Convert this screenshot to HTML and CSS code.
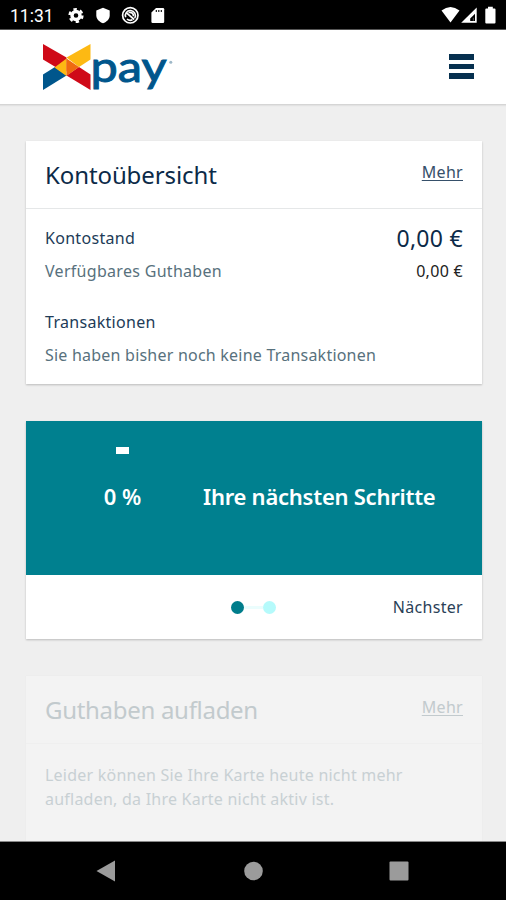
FILE: index.html
```
<!DOCTYPE html>
<html lang="de">
<head>
<meta charset="UTF-8" />
<title>Xpay</title>
<link rel="stylesheet" href="styles.css">
</head>
<body>
<div class="status-bar">
    <span class="clock">11:31</span>
    <svg class="status-icons" width="100" height="30" viewBox="0 0 100 30">
        <!-- settings -->
        <circle cx="9" cy="15.5" r="4" fill="none" stroke="#fff" stroke-width="3.4"/>
        <circle cx="9" cy="15.5" r="6.4" fill="none" stroke="#fff" stroke-width="2.4" stroke-dasharray="3.4 3.3"/>
        <!-- shield -->
        <path d="M36 7.8l6.7 2.8v4.6c0 3.8-2.8 6.6-6.7 8-3.9-1.4-6.7-4.2-6.7-8v-4.6z" fill="#fff"/>
        <!-- do not track -->
        <circle cx="63.3" cy="15.3" r="7.7" fill="none" stroke="#fff" stroke-width="1.7"/>
        <path d="M58.7 17.3a5 5 0 1 1 9 .7M60 19a5 5 0 0 0 5.5.8" fill="none" stroke="#fff" stroke-width="1.6"/>
        <path d="M59.2 12.7l8 6.8M61.5 12.5c3-.6 5 .6 5 3.7" fill="none" stroke="#fff" stroke-width="1.7"/>
        <!-- sd card -->
        <path d="M89 8h7q1.2 0 1.2 1.2v12.6q0 1.2-1.2 1.2H85.6q-1.2 0-1.2-1.2V12.6z" fill="#fff"/>
        <path d="M89.3 10v2M91.8 10v2M94.3 10v2" stroke="#000" stroke-width="1.1"/>
    </svg>
    <svg class="signal-icons" width="58" height="30" viewBox="0 0 58 30">
        <path d="M.5 10.5Q9.500 3.300 18.500 10.500L9.500 22.500z" fill="#fff"/>
        <path d="M35.7 7.5v15.300H20.200z" fill="#fff"/>
        <path d="M34 13.800v7.300h-4.800v-2.500z" fill="#000"/>
        <path d="M31.800 17.800h1.200v3h-1.200z" fill="#fff" opacity=".3"/>
        <path d="M44.300 9.500q0-1 1-1h1.700V6.800h4.800v1.700h1.700q1 0 1 1v13q0 1-1 1h-8.200q-1 0-1-1z" fill="#fff"/>
    </svg>
</div>

<div class="header">
    <svg class="logo" width="134" height="62" viewBox="0 0 134 62">
        <path d="M1 3l23.500 13.500v14L13.500 26 1 18.500z" fill="#cf0a18"/>
        <path d="M48.500 3v15.500L37 26l-12.500-9.500z" fill="#fdb913"/>
        <path d="M1 49V33.500l12-7.500 11.500 8.500z" fill="#00568c"/>
        <path d="M48.500 49V33.500L37 26l-12.500 8.500z" fill="#cf0a18"/>
        <path d="M24.500 17.500V35L12.500 26.500z" fill="#fdb913"/>
        <path d="M24.500 17.500V35L37 26z" fill="#ef6a10"/>
        <text class="logo-text" x="48.500" y="41" textLength="76" lengthAdjust="spacingAndGlyphs">pay</text>
        <circle cx="128.800" cy="21.300" r="1.500" fill="#9eb8c8"/>
    </svg>
    <div class="menu-btn">
        <span></span>
        <span></span>
        <span></span>
    </div>
</div>

<div class="content">
    <div class="card account">
        <div class="card-header">
            <h2>Kontoübersicht</h2>
            <a class="more">Mehr</a>
        </div>
        <div class="card-body">
            <div class="row">
                <span class="label">Kontostand</span>
                <span class="amount big">0,00 €</span>
            </div>
            <div class="row">
                <span>Verfügbares Guthaben</span>
                <span class="amount">0,00 €</span>
            </div>
            <div class="row transactions">
                <span class="label">Transaktionen</span>
            </div>
            <div class="row">
                <span class="empty">Sie haben bisher noch keine Transaktionen</span>
            </div>
        </div>
    </div>

    <div class="card steps">
        <div class="steps-banner">
            <div class="progress">
                <div class="progress-mark"></div>
                <div class="progress-value">0 %</div>
            </div>
            <div class="steps-title">Ihre nächsten Schritte</div>
        </div>
        <div class="steps-nav">
            <div class="dots">
                <span class="dot active"></span>
                <span class="dot-line"></span>
                <span class="dot"></span>
            </div>
            <span class="next">Nächster</span>
        </div>
    </div>

    <div class="card topup">
        <div class="card-header">
            <h2>Guthaben aufladen</h2>
            <a class="more">Mehr</a>
        </div>
        <p>Leider können Sie Ihre Karte heute nicht mehr<br>aufladen, da Ihre Karte nicht aktiv ist.</p>
    </div>
</div>

<div class="nav-bar">
    <svg width="506" height="58" viewBox="0 0 506 58">
        <path d="M115 18.500v21L96.500 29z" fill="#9b9b9b"/>
        <circle cx="253.500" cy="29" r="9.300" fill="#9b9b9b"/>
        <rect x="389.500" y="19.500" width="19" height="19" rx="1" fill="#9b9b9b"/>
    </svg>
</div>
</body>
</html>
```
FILE: styles.css
```
* {
    box-sizing: border-box;
}

body {
    margin: 0;
    width: 506px;
    height: 900px;
    overflow: hidden;
    display: flex;
    flex-direction: column;
    background: #efefef;
    color: #58717d;
    font-family: "Noto Sans", "Open Sans", sans-serif;
    font-size: 16px;
    letter-spacing: 0.3px;
}

.status-bar {
    flex: none;
    display: flex;
    height: 30px;
    padding: 0 7px 0 10px;
    background: #000;
    border-bottom: 1px solid #555;
}

.clock {
    width: 57px;
    color: #fff;
    font: 17.5px/32px Roboto, sans-serif;
    letter-spacing: 0;
}

.signal-icons {
    margin-left: auto;
}

.header {
    flex: none;
    display: flex;
    justify-content: space-between;
    height: 75px;
    padding: 11px 32px 0 42px;
    background: #fff;
    border-bottom: 1px solid #d5d5d5;
    box-shadow: 0 1px 1px #e2e2e2;
}

.logo-text {
    font-family: Lato, sans-serif;
    font-size: 43px;
    letter-spacing: 0;
    fill: #00568c;
    stroke: #00568c;
    stroke-width: 1;
}

.menu-btn {
    display: flex;
    flex-direction: column;
    gap: 4px;
    width: 25px;
    padding-top: 13px;
}

.menu-btn span {
    height: 5.5px;
    background: #06304f;
}

.content {
    flex: 1;
    min-height: 0;
    overflow: hidden;
    display: flex;
    flex-direction: column;
    gap: 37px;
    padding: 36px 24px 0 26px;
}

.card {
    flex: none;
    background: #fff;
    box-shadow: 0 1px 2px rgba(0, 0, 0, 0.22);
}

.account {
    height: 243px;
}

.card-header {
    display: flex;
    justify-content: space-between;
    height: 68px;
    padding: 0 19px;
    border-bottom: 1px solid #e5e7e8;
}

h2 {
    margin: 0;
    color: #0c2a48;
    font-size: 24px;
    font-weight: normal;
    line-height: 67px;
    letter-spacing: -0.1px;
    white-space: nowrap;
}

.more {
    color: #36506a;
    line-height: 62px;
    text-decoration: underline;
    text-underline-offset: 2px;
}

.card-body {
    padding: 13px 19px 0;
}

.row {
    display: flex;
    justify-content: space-between;
    height: 33px;
    line-height: 33px;
    white-space: nowrap;
}

.transactions {
    margin-top: 18px;
}

.label {
    color: #213b57;
}

.empty {
    letter-spacing: 0.22px;
}

.amount {
    color: #222;
}

.amount.big {
    color: #0c2a48;
    font-size: 23px;
}

.steps {
    height: 218px;
}

.steps-banner {
    display: flex;
    height: 154px;
    background: #00808f;
    color: #fff;
    font-size: 22px;
    font-weight: 600;
    letter-spacing: -0.25px;
    white-space: nowrap;
}

.progress {
    display: flex;
    flex-direction: column;
    align-items: center;
    width: 177px;
    padding: 26px 0 0 16px;
}

.progress-mark {
    width: 13px;
    height: 7px;
    background: #fff;
}

.progress-value {
    margin-top: 27px;
    line-height: 30px;
    letter-spacing: 0;
}

.steps-title {
    padding-top: 60px;
    line-height: 30px;
}

.steps-nav {
    display: flex;
    justify-content: space-between;
    align-items: center;
    height: 64px;
    padding: 0 19px 0 205px;
}

.dots {
    display: flex;
    align-items: center;
}

.dot {
    width: 13px;
    height: 13px;
    border-radius: 50%;
    background: #b5fafb;
}

.dot.active {
    background: #007d8b;
}

.dot-line {
    width: 19px;
    height: 3px;
    background: #ebfdfd;
}

.next {
    color: #2a3f57;
}

.topup {
    height: 220px;
    background: #f3f3f3;
    box-shadow: 0 0 1px rgba(0, 0, 0, 0.05);
}

.topup .card-header {
    border-color: #efefef;
}

.topup h2,
.topup .more {
    color: #c2cacd;
}

.topup h2 {
    letter-spacing: -0.3px;
}

.topup p {
    margin: 0;
    padding: 19px 19px 0;
    color: #c8d0d3;
    line-height: 24px;
    letter-spacing: 0.23px;
    white-space: nowrap;
}

.nav-bar {
    flex: none;
    height: 59px;
    background: #000;
    border-top: 1px solid #888;
}
```
